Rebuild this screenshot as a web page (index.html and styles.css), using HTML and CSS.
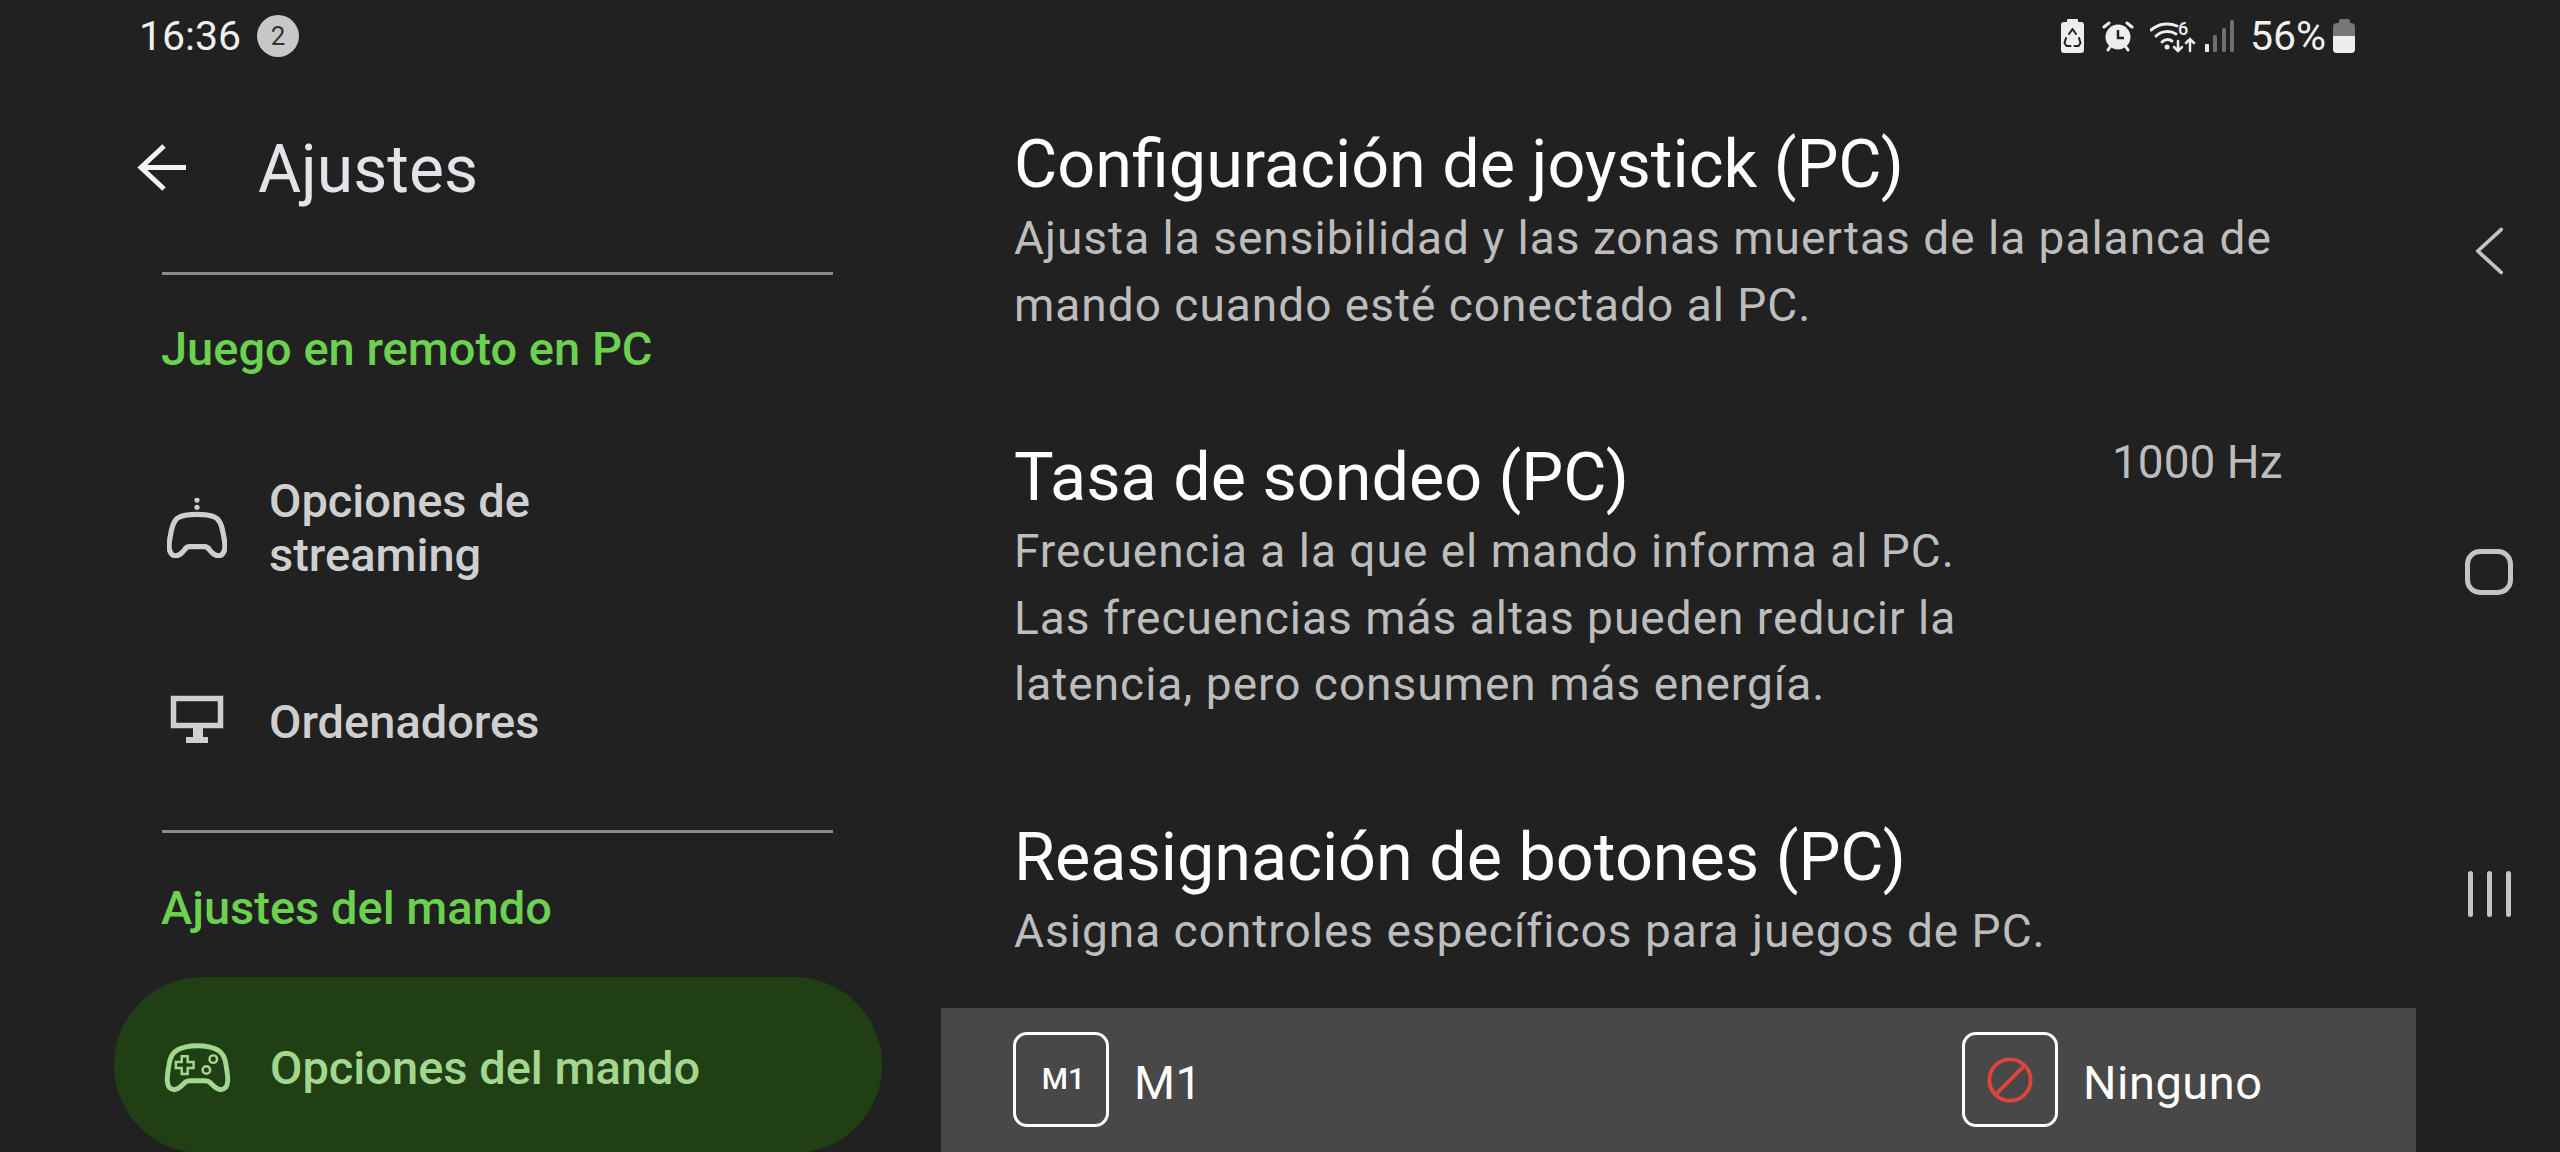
FILE: index.html
```html
<!DOCTYPE html>
<html lang="es">
<head>
  <meta charset="UTF-8">
  <meta name="viewport" content="width=device-width, initial-scale=1.0">
  <title>Ajustes</title>
  <link rel="stylesheet" href="styles.css">
</head>
<body>
  <div class="screen">
    <div class="app">
      <header class="status-bar">
        <div class="status-left">
          <span class="clock">16:36</span>
          <span class="notif-count">2</span>
        </div>
        <div class="status-right">
          <svg class="st-saver" viewBox="0 0 23 34">
            <path fill="#eeeeee" d="M7 0h9a1 1 0 0 1 1 1v2h3a3 3 0 0 1 3 3v25a3 3 0 0 1-3 3H3a3 3 0 0 1-3-3V6a3 3 0 0 1 3-3h3V1a1 1 0 0 1 1-1z"/>
            <path fill="none" stroke="#212121" stroke-width="2" stroke-linejoin="round" stroke-linecap="round" d="M8 15l3.500-5 3.500 5M5 19l-1.500 5 2 3h4M18 19l1.500 5-2 3h-4"/>
          </svg>
          <svg class="st-alarm" viewBox="0 0 32 32">
            <path fill="none" stroke="#eeeeee" stroke-width="3" stroke-linecap="round" d="M2 7l5-4M30 7l-5-4M6 30l2-3M26 30l-2-3"/>
            <circle cx="16" cy="17" r="12.500" fill="#eeeeee"/>
            <path fill="none" stroke="#212121" stroke-width="2.500" d="M16 10v8h6"/>
          </svg>
          <svg class="st-wifi" viewBox="0 0 46 34">
            <g fill="none" stroke="#eeeeee" stroke-width="3" stroke-linecap="round">
              <path d="M1 11c7-6 17-8 26-4"/>
              <path d="M6 17c5-5 14-6 20-2"/>
              <path d="M12 23c3-3 7-3 10-1"/>
              <path d="M28 22v10M24 28l4 4 4-4" stroke-width="2.500"/>
              <path d="M40 32V20M36 24l4-4 4 4" stroke-width="2.500"/>
            </g>
            <circle cx="17" cy="28" r="2.500" fill="#eeeeee"/>
            <text class="st-wifi-six" x="28" y="16">6</text>
          </svg>
          <svg class="st-signal" viewBox="0 0 30 34">
            <rect x="0" y="25" width="4" height="8" rx="1" fill="#eeeeee"/>
            <rect x="8" y="16" width="4" height="17" rx="1.500" fill="#6f6f6f"/>
            <rect x="17" y="9" width="4" height="24" rx="1.500" fill="#6f6f6f"/>
            <rect x="25" y="1" width="4" height="32" rx="1.500" fill="#6f6f6f"/>
          </svg>
          <span class="battery-pct">56%</span>
          <div class="battery">
            <span class="battery-cap"></span>
            <div class="battery-body"><span class="battery-fill"></span></div>
          </div>
        </div>
      </header>

      <div class="panes">
        <aside class="sidebar">
          <div class="side-head">
            <svg class="back-arrow" viewBox="0 0 50 48">
              <path fill="none" stroke="#f4f4f4" stroke-width="5" d="M49 23.500H5M27 2L4 23.500 27 45"/>
            </svg>
            <h1>Ajustes</h1>
          </div>
          <hr class="rule">
          <h2 class="group-title">Juego en remoto en PC</h2>
          <div class="side-item side-item-tall">
            <svg class="ico" viewBox="1 1 58 58">
              <circle cx="30" cy="3" r="2.500" fill="#cfcfcf"/>
              <circle cx="30" cy="10" r="2.500" fill="#cfcfcf"/>
              <path fill="none" stroke="#cfcfcf" stroke-width="5" stroke-linejoin="round" d="M14 19C20 16 40 16 46 19 52 21 54 27 56 39 58 49 57 56 51 57 46 57 44 53 42 51 41 49 39 48 37 48H23C21 48 19 49 18 51 16 53 14 57 9 57 3 56 2 49 4 39 6 27 8 21 14 19Z"/>
            </svg>
            <span>Opciones de<br>streaming</span>
          </div>
          <div class="side-item side-item-short">
            <svg class="ico" viewBox="0 0 60 60">
              <path fill="none" stroke="#cfcfcf" stroke-width="5.500" d="M6.500 6.500h47v27h-47z"/>
              <path fill="#cfcfcf" d="M26 36h10v9h5v6H19v-6h7z"/>
            </svg>
            <span>Ordenadores</span>
          </div>
          <hr class="rule">
          <h2 class="group-title group-title-second">Ajustes del mando</h2>
          <div class="side-item side-item-active">
            <svg class="ico ico-pad" viewBox="0 0 68 50">
              <g fill="none" stroke="#a3d68f">
                <path stroke-width="5" stroke-linejoin="round" d="M13 7C24 1 44 1 55 7 60 10 62 14 63 22 65 34 67 46 58 47 53 47 50 43 47 40 45 38 43 38 41 38H27C25 38 23 38 21 40 18 43 15 47 10 47 1 46 3 34 5 22 6 14 8 10 13 7Z"/>
                <path stroke-width="2.500" d="M18 13h6v6h6v6h-6v6h-6v-6h-6v-6h6z"/>
                <circle cx="50" cy="16" r="3.800" stroke-width="2.500"/>
                <circle cx="43" cy="27" r="3.800" stroke-width="2.500"/>
              </g>
            </svg>
            <span>Opciones del mando</span>
          </div>
        </aside>

        <main class="settings">
          <section class="setting setting-joystick">
            <h3>Configuración de joystick (PC)</h3>
            <p>Ajusta la sensibilidad y las zonas muertas de la palanca de<br>mando cuando esté conectado al PC.</p>
          </section>
          <section class="setting setting-polling">
            <div class="setting-text">
              <h3>Tasa de sondeo (PC)</h3>
              <p>Frecuencia a la que el mando informa al PC.<br>Las frecuencias más altas pueden reducir la<br>latencia, pero consumen más energía.</p>
            </div>
            <span class="setting-value">1000 Hz</span>
          </section>
          <section class="setting setting-remap">
            <h3>Reasignación de botones (PC)</h3>
            <p>Asigna controles específicos para juegos de PC.</p>
          </section>
        </main>
      </div>

      <div class="remap-row">
        <div class="remap-cell">
          <span class="key-box key-box-text">M1</span>
          <span class="remap-label">M1</span>
        </div>
        <div class="remap-cell">
          <span class="key-box">
            <svg class="none-ico" viewBox="0 0 50 50">
              <circle cx="25" cy="25" r="21.500" fill="none" stroke="#e0443a" stroke-width="4"/>
              <path d="M10 40L40 10" stroke="#e0443a" stroke-width="4"/>
            </svg>
          </span>
          <span class="remap-label">Ninguno</span>
        </div>
      </div>
    </div>

    <nav class="nav-bar">
      <svg class="nav-back" viewBox="0 0 30 50"><path fill="none" stroke="#c4c4c4" stroke-width="4" stroke-linecap="round" stroke-linejoin="round" d="M28 2L3 25l25 23"/></svg>
      <span class="nav-home"></span>
      <div class="nav-recents"><span></span><span></span><span></span></div>
    </nav>
  </div>
</body>
</html>
```

FILE: styles.css
```css
body {
  margin: 0;
  background-color: #212121;
  font-family: Roboto, "Liberation Sans", sans-serif;
  overflow: hidden;
}
.screen {
  width: 2560px;
  height: 1152px;
  display: flex;
  overflow: hidden;
}
.app {
  position: relative;
  width: 2416px;
  height: 1152px;
}

/* status bar */
.status-bar {
  height: 72px;
  display: flex;
  justify-content: space-between;
  align-items: center;
  padding: 0 61px 0 139px;
  box-sizing: border-box;
  color: #f0f0f0;
}
.status-left {
  display: flex;
  align-items: center;
  gap: 16px;
}
.clock {
  font-size: 41px;
}
.notif-count {
  width: 42px;
  height: 42px;
  border-radius: 50%;
  background-color: #c8c8c8;
  color: #333333;
  font-size: 26px;
  display: flex;
  align-items: center;
  justify-content: center;
}
.status-right {
  display: flex;
  align-items: center;
}
.st-saver { width: 23px; height: 34px; margin-right: 18px; }
.st-alarm { width: 32px; height: 32px; margin-right: 16px; }
.st-wifi { width: 46px; height: 34px; margin-right: 9px; }
.st-wifi-six { font-size: 18px; font-weight: 500; fill: #eeeeee; }
.st-signal { width: 30px; height: 34px; margin-right: 15px; }
.battery-pct { font-size: 41px; margin-right: 7px; }
.battery {
  width: 22px;
  display: flex;
  flex-direction: column;
  align-items: center;
}
.battery-cap {
  width: 11px;
  height: 4px;
  background-color: #777777;
  border-radius: 2px 2px 0 0;
}
.battery-body {
  width: 22px;
  height: 30px;
  background-color: #777777;
  border-radius: 4px;
  display: flex;
  align-items: flex-end;
  overflow: hidden;
}
.battery-fill {
  width: 100%;
  height: 17px;
  background-color: #eeeeee;
}

.panes {
  display: flex;
}

/* left column */
.sidebar {
  width: 941px;
  flex-shrink: 0;
}
.side-head {
  height: 192px;
  margin-bottom: 8px;
  padding-left: 137px;
  display: flex;
  align-items: center;
}
.back-arrow {
  width: 50px;
  height: 48px;
}
.side-head h1 {
  margin: 3px 0 0 71px;
  font-size: 66px;
  font-weight: 400;
  color: #e6e2ea;
}
.rule {
  width: 671px;
  height: 3px;
  margin: 0 0 0 162px;
  border: none;
  background-color: #8a8a8a;
}
.group-title {
  margin: 0 0 0 161px;
  height: 142px;
  line-height: 148px;
  font-size: 47px;
  font-weight: 500;
  color: #6cd14f;
}
.group-title-second {
  height: 144px;
  line-height: 150px;
}
.side-item {
  display: flex;
  align-items: center;
  gap: 42px;
  margin-left: 167px;
  font-size: 47px;
  font-weight: 500;
  line-height: 54px;
  color: #cfcfcf;
}
.side-item-tall { height: 222px; }
.side-item-short {
  height: 166px;
  margin-bottom: 25px;
}
.ico {
  width: 60px;
  height: 60px;
  flex-shrink: 0;
}
.side-item-active {
  width: 768px;
  height: 176px;
  margin: 0 0 0 114px;
  padding: 6px 0 0 50px;
  box-sizing: border-box;
  gap: 39px;
  border-radius: 88px;
  background-color: #213f15;
  color: #a3d68f;
}
.ico-pad {
  width: 67px;
  height: 50px;
}

/* right column */
.settings {
  padding: 52px 0 0 73px;
  flex: 1;
}
.setting h3 {
  margin: 0;
  font-size: 66.5px;
  font-weight: 400;
  line-height: 81px;
  color: #ffffff;
}
.setting p {
  margin: 0;
  font-size: 46px;
  line-height: 66.5px;
  letter-spacing: 1px;
  color: #bdbdbd;
}
.setting-polling {
  margin-top: 99px;
  display: flex;
}
.setting-text {
  width: 1098px;
}
.setting-value {
  font-size: 46px;
  line-height: 46px;
  margin-top: 2px;
  color: #bdbdbd;
}
.setting-remap {
  margin-top: 99px;
}

/* remap row, lies over the bottom of the list */
.remap-row {
  position: absolute;
  left: 941px;
  right: 0;
  top: 1008px;
  height: 144px;
  padding: 24px 96px 0 72px;
  box-sizing: border-box;
  background-color: #484848;
  display: flex;
}
.remap-cell {
  display: flex;
  gap: 25px;
  width: 949px;
}
.remap-cell:last-child { width: auto; }
.key-box {
  width: 96px;
  height: 95px;
  box-sizing: border-box;
  border: 3px solid #ffffff;
  border-radius: 14px;
  display: flex;
  align-items: center;
  justify-content: center;
  flex-shrink: 0;
}
.key-box-text {
  font-size: 30px;
  font-weight: 500;
  color: #ffffff;
  padding: 0 0 2px 5px;
}
.none-ico {
  width: 48px;
  height: 48px;
}
.remap-label {
  font-size: 47px;
  line-height: 101px;
  letter-spacing: 0.5px;
  color: #ffffff;
}

/* system nav */
.nav-bar {
  width: 144px;
  height: 1152px;
  position: relative;
  display: flex;
  flex-direction: column;
  align-items: center;
  padding: 227px 0 0 2px;
  box-sizing: border-box;
}
.nav-back {
  width: 28px;
  height: 48px;
  display: block;
}
.nav-home {
  display: block;
  width: 48px;
  height: 46px;
  margin-top: 274px;
  box-sizing: border-box;
  border: 5px solid #c4c4c4;
  border-radius: 15px;
}
.nav-recents {
  display: flex;
  gap: 14px;
  margin-top: 276px;
}
.nav-recents span {
  width: 5px;
  height: 46px;
  border-radius: 3px;
  background-color: #c4c4c4;
}
```
